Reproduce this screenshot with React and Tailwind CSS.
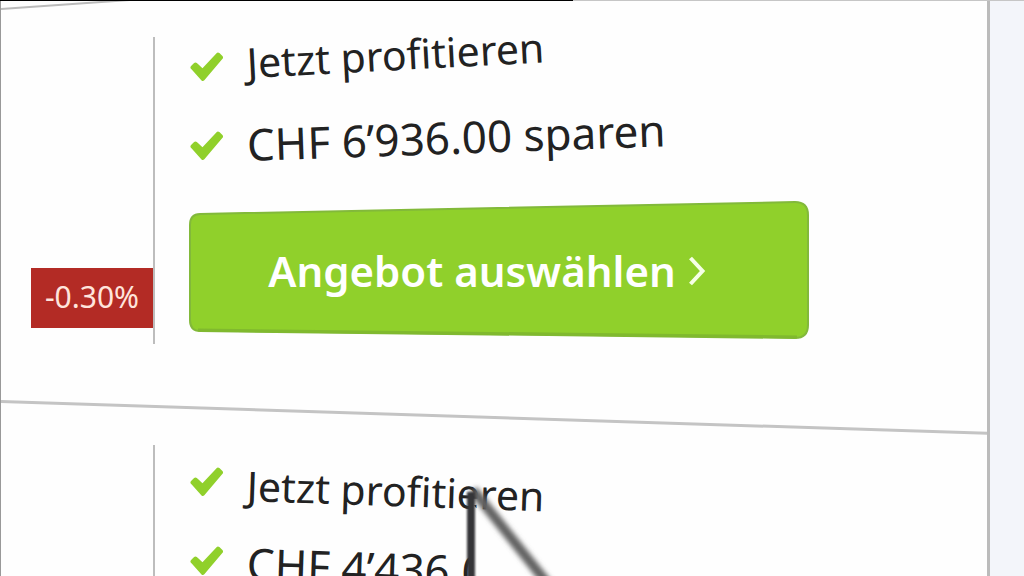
import React from "react";

function Check() {
  return (
    <svg viewBox="0 0 34 30" className="h-[30px] w-[34px] shrink-0" aria-hidden="true">
      <path
        d="M3.500 15.500 L6.500 12.500 L13.500 19 L29 2.500 L32 5.500 L13.800 27 Z"
        fill="#90d02b"
        stroke="#90d02b"
        strokeWidth="4"
        strokeLinejoin="round"
      />
    </svg>
  );
}

function Benefit({ children, className }) {
  return (
    <li className="flex h-[79px] items-center gap-6">
      <Check />
      <span className={`origin-left whitespace-nowrap ${className}`}>{children}</span>
    </li>
  );
}

function Pointer() {
  return (
    <svg
      viewBox="0 0 130 110"
      className="pointer-events-none absolute left-[446px] top-[476px] h-[110px] w-[130px]"
      aria-hidden="true"
    >
      <defs>
        <filter id="edge" x="-20%" y="-20%" width="140%" height="140%">
          <feGaussianBlur stdDeviation="2.5" />
        </filter>
        <filter id="stem" x="-100%" y="-10%" width="300%" height="120%">
          <feGaussianBlur stdDeviation="1" />
        </filter>
      </defs>
      <path d="M25 26 L98 110 H25 Z" fill="#fefefe" />
      <path d="M27 14 L105 112" stroke="#626262" strokeWidth="10" filter="url(#edge)" />
      <rect x="21" y="16" width="8" height="100" fill="#363638" filter="url(#stem)" />
    </svg>
  );
}

export default function App() {
  return (
    <div className="relative flex h-screen overflow-hidden bg-[#f3f5fa] font-['Noto_Sans',sans-serif] text-[#222]">
      <main className="relative min-w-0 flex-1 overflow-hidden border-l border-r-[3px] border-l-[#999] border-r-[#bbb] bg-[#fefefe]">
        <section className="relative flex h-[401px] pt-[37px]">
          <hr className="absolute left-0 top-[8px] w-[140px] origin-left -rotate-4 border-t-2 border-[#bbb]" />
          <div className="flex h-[307px] w-[154px] shrink-0 items-end justify-end border-r-2 border-[#bdbdbd] pb-4">
            <span className="flex h-[60px] w-[122px] items-center justify-center bg-[#b32b25] pb-1 text-[30px] text-[#ffe4dc]">
              -0.30%
            </span>
          </div>
          <div className="pl-[34px]">
            <ul className="-mt-[10px]">
              <Benefit className="pb-2 text-[41px] -rotate-3">Jetzt profitieren</Benefit>
              <Benefit className="pb-1 text-[44px] -rotate-2">CHF 6’936.00 sparen</Benefit>
            </ul>
            <button
              type="button"
              className="relative mt-4 flex h-[139px] w-[620px] items-center justify-center gap-3 pr-6 text-[42px] font-semibold text-white"
            >
              <svg
                viewBox="0 0 620 139"
                preserveAspectRatio="none"
                className="absolute inset-0 h-full w-full"
                aria-hidden="true"
              >
                <path
                  d="M11 13 L606 1 Q619 1 619 14 V124 Q619 137 606 137 L11 130 Q1 130 1 119 V24 Q1 13 11 13 Z"
                  fill="#90d02b"
                  stroke="#82b93a"
                  strokeWidth="2"
                />
                <path d="M9 129 L608 136" stroke="#80b92e" strokeWidth="3" />
              </svg>
              <span className="relative">Angebot auswählen</span>
              <svg viewBox="0 0 18 30" className="relative h-[30px] w-[18px]" aria-hidden="true">
                <path d="M2.500 2 L14.500 15 L2.500 28" fill="none" stroke="#f6ffe6" strokeWidth="4" />
              </svg>
            </button>
          </div>
        </section>
        <section className="relative flex h-[307px] pt-11">
          <hr className="absolute -top-px left-0 w-[110%] origin-left rotate-[1.85deg] border-t-[3px] border-[#c4c4c4]" />
          <div className="w-[154px] shrink-0 border-r-2 border-[#bdbdbd]" />
          <div className="pl-[34px]">
            <ul className="-mt-[3px]">
              <Benefit className="pt-2 text-[41px] rotate-2">Jetzt profitieren</Benefit>
              <Benefit className="pt-1 text-[44px] rotate-2">CHF 4’436.00</Benefit>
            </ul>
          </div>
        </section>
      </main>
      <aside className="w-[34px] shrink-0" />
      <div className="absolute inset-x-0 top-0 flex h-px bg-[#c6c6c6]">
        <div className="w-[56%] bg-black" />
      </div>
      <Pointer />
    </div>
  );
}
